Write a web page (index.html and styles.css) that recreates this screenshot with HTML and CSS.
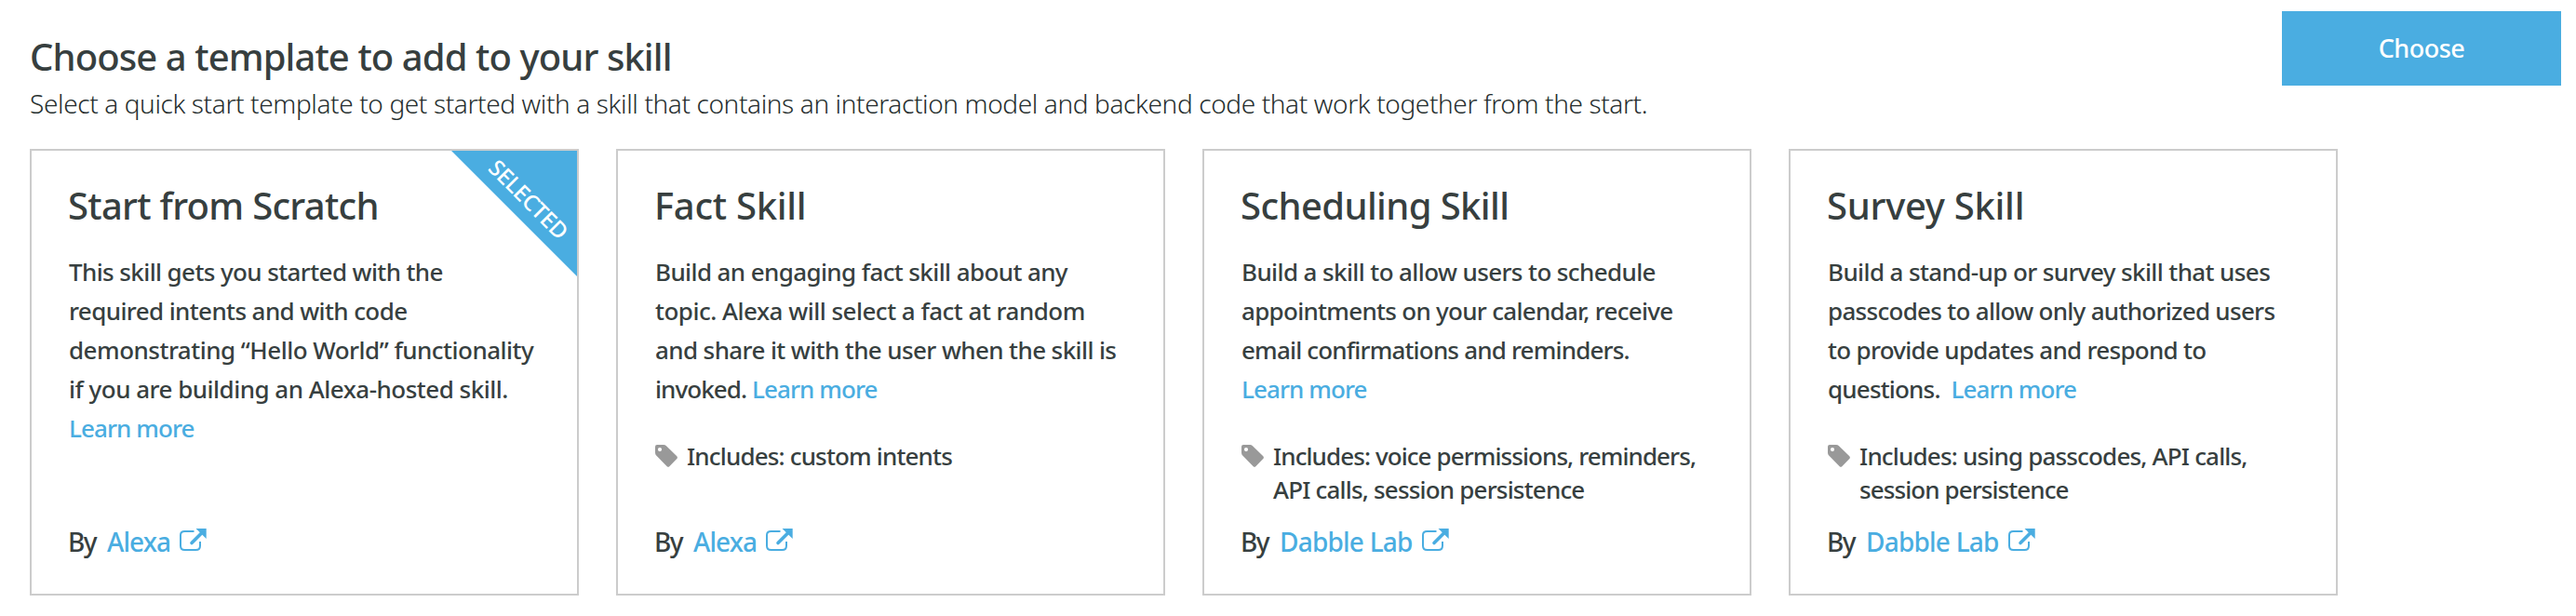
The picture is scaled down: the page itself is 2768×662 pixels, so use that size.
FILE: index.html
```
<!DOCTYPE html>
<html lang="en">
<head>
<meta charset="utf-8">
<title>Choose a template</title>
<link rel="stylesheet" href="styles.css">
</head>
<body>
<svg class="defs" aria-hidden="true">
  <symbol id="external" viewBox="0 0 29 24">
    <path d="M15.500 3H5.500Q1 3 1 7v11.500q0 4.500 4.500 4.500h12q4.500 0 4.500-4.500V14" fill="none" stroke="currentColor" stroke-width="2"/>
    <path d="M13 15.500 23.500 5" fill="none" stroke="currentColor" stroke-width="3.600" stroke-linecap="round"/>
    <path d="M17.500 0H28.700V11z" fill="currentColor"/>
  </symbol>
  <symbol id="tag" viewBox="0 0 24 24">
    <path fill="currentColor" fill-rule="evenodd" d="M2 0h7q1.800 0 3 1.200L23.300 12.300q1.200 1.400 0 2.600l-8 8.300q-1.300 1.200-2.600 0L1.200 11.500Q0 10.300 0 8.500V2Q0 0 2 0zM5 3a2.100 2.100 0 1 0 0 4.200A2.100 2.100 0 0 0 5 3z"/>
  </symbol>
</svg>
<header class="header">
  <div class="intro">
    <h1 class="title">Choose a template to add to your skill</h1>
    <p class="subtitle">Select a quick start template to get started with a skill that contains an interaction model and backend code that work together from the start.</p>
  </div>
  <button class="choose" type="button">Choose</button>
</header>
<main class="cards">
  <article class="card">
    <div class="ribbon"><span class="ribbon-label">SELECTED</span></div>
    <h2 class="name k7">Start from Scratch</h2>
    <p class="description">
      <span class="line k6">This skill gets you started with the</span>
      <span class="line k6">required intents and with code</span>
      <span class="line k5">demonstrating “Hello World” functionality</span>
      <span class="line k5">if you are building an Alexa-hosted skill.</span>
      <span class="line"><a class="link">Learn more</a></span>
    </p>
    <p class="author"><span class="by">By</span><a class="link alexa">Alexa</a><svg class="external"><use href="#external"/></svg></p>
  </article>
  <article class="card">
    <h2 class="name k3">Fact Skill</h2>
    <p class="description">
      <span class="line k6">Build an engaging fact skill about any</span>
      <span class="line k5">topic. Alexa will select a fact at random</span>
      <span class="line k6">and share it with the user when the skill is</span>
      <span class="line k9">invoked. <a class="link">Learn more</a></span>
    </p>
    <div class="includes"><svg class="tag"><use href="#tag"/></svg><p class="features"><span class="line">Includes: custom intents</span></p></div>
    <p class="author"><span class="by">By</span><a class="link alexa">Alexa</a><svg class="external"><use href="#external"/></svg></p>
  </article>
  <article class="card">
    <h2 class="name k6">Scheduling Skill</h2>
    <p class="description">
      <span class="line k6">Build a skill to allow users to schedule</span>
      <span class="line k7">appointments on your calendar, receive</span>
      <span class="line k8">email confirmations and reminders.</span>
      <span class="line"><a class="link">Learn more</a></span>
    </p>
    <div class="includes"><svg class="tag"><use href="#tag"/></svg><p class="features"><span class="line k9">Includes: voice permissions, reminders,</span><span class="line k8">API calls, session persistence</span></p></div>
    <p class="author"><span class="by">By</span><a class="link">Dabble Lab</a><svg class="external"><use href="#external"/></svg></p>
  </article>
  <article class="card">
    <h2 class="name k3">Survey Skill</h2>
    <p class="description">
      <span class="line k6">Build a stand-up or survey skill that uses</span>
      <span class="line k7">passcodes to allow only authorized users</span>
      <span class="line k7">to provide updates and respond to</span>
      <span class="line k8">questions.&nbsp; <a class="link">Learn more</a></span>
    </p>
    <div class="includes"><svg class="tag"><use href="#tag"/></svg><p class="features"><span class="line k8">Includes: using passcodes, API calls,</span><span class="line k9">session persistence</span></p></div>
    <p class="author"><span class="by">By</span><a class="link">Dabble Lab</a><svg class="external"><use href="#external"/></svg></p>
  </article>
</main>
</body>
</html>
```
FILE: styles.css
```
* { box-sizing: border-box; }
body {
  margin: 0;
  background: #fff;
  color: #373f3f;
  font-family: "Noto Sans", "Open Sans", sans-serif;
  font-weight: 500;
}
h1, h2, p { margin: 0; font-weight: 500; }
.defs { display: none; }

.header {
  display: flex;
  justify-content: space-between;
  align-items: flex-start;
  height: 160px;
  padding: 12px 16px 0 32px;
}
.intro { padding-top: 24px; white-space: nowrap; }
.title { font-size: 40px; line-height: 50px; letter-spacing: -0.91px; }
.subtitle {
  margin-top: 6px;
  color: #262e2e;
  font-size: 28px;
  line-height: 38px;
  font-weight: 300;
  letter-spacing: -0.38px;
}
.choose {
  width: 300px;
  height: 80px;
  padding: 0 0 2px;
  border: 0;
  background: #4aade1;
  color: #fff;
  font: inherit;
  font-size: 27px;
  letter-spacing: -0.5px;
}

.cards { display: flex; gap: 40px; padding-left: 32px; }
.card {
  position: relative;
  display: flex;
  flex-direction: column;
  width: 590px;
  height: 480px;
  padding: 34px 30px 36px 40px;
  border: 2px solid #ccc;
  white-space: nowrap;
}
.name { margin-left: -1px; font-size: 40px; line-height: 50px; }
.description { margin-top: 25px; font-size: 26px; line-height: 42px; }
.line { display: block; letter-spacing: -0.84px; }
.link { color: #4aade1; letter-spacing: -0.92px; }

.includes { display: flex; align-items: flex-start; gap: 10px; margin-top: 33px; }
.tag { width: 24px; height: 24px; margin-top: 6px; color: #999; }
.features { font-size: 26px; line-height: 36px; }

.author {
  display: flex;
  align-items: flex-start;
  margin-top: auto;
  font-size: 28px;
  line-height: 40px;
}
.by { width: 41px; margin-left: -1px; margin-right: 1px; letter-spacing: -1.6px; }
.author .link { letter-spacing: -0.78px; }
.author .alexa { letter-spacing: -0.9px; }
.external { width: 29px; height: 24px; margin: 6px 0 0 10px; color: #4aade1; }

.ribbon {
  position: absolute;
  top: 0;
  right: 0;
  width: 135px;
  height: 135px;
  background: #4aade1;
  clip-path: polygon(0 0, 100% 0, 100% 100%);
}
.ribbon-label {
  position: absolute;
  left: 83px;
  top: 52px;
  color: #fff;
  font-size: 24px;
  line-height: 30px;
  font-weight: 500;
  letter-spacing: -0.5px;
  transform: translate(-50%, -50%) rotate(45deg);
}

/* Tracking steps */
.k3 { letter-spacing: -0.28px; }
.k5 { letter-spacing: -0.51px; }
.k6 { letter-spacing: -0.61px; }
.k7 { letter-spacing: -0.71px; }
.k8 { letter-spacing: -0.82px; }
.k9 { letter-spacing: -0.92px; }
```
